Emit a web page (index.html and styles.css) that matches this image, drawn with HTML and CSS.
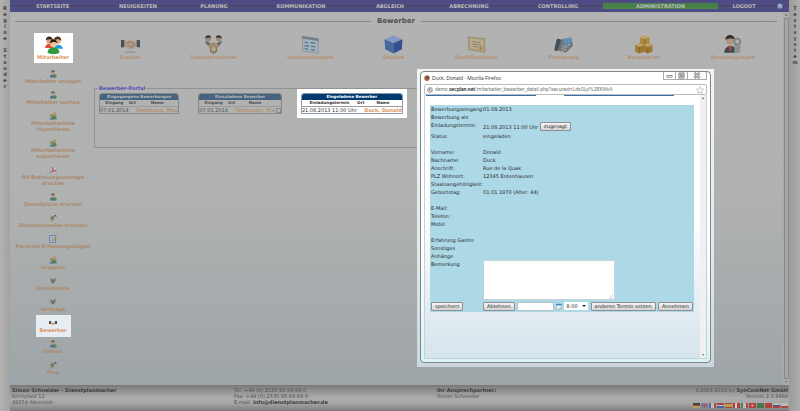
FILE: index.html
```html
<!DOCTYPE html>
<html lang="de">
<head>
<meta charset="utf-8">
<title>Bewerber</title>
<link rel="stylesheet" href="styles.css">
</head>
<body>
<svg class="defs" aria-hidden="true">
  <defs>
    <symbol id="person" viewBox="0 0 16 16">
      <path d="M2 15c0-5 2-6 6-6s5 2 5 6z" fill="#4d708a"/>
      <circle cx="8" cy="5" r="4" fill="#b39a80"/>
      <path d="M4 5c0-6 8-6 8 0-2-2-5-2-8 0z" fill="#6a5d4c"/>
      <circle cx="12" cy="12" r="3.500" fill="#55885a"/>
    </symbol>
    <symbol id="people" viewBox="0 0 16 16">
      <circle cx="11" cy="4" r="3.500" fill="#ab9462"/>
      <path d="M6 15V9c2-3 9-3 9 1v5z" fill="#578554"/>
      <circle cx="5" cy="7" r="3" fill="#9c7f5f"/>
      <path d="M1 15c0-5 8-5 8 0z" fill="#4d7196"/>
    </symbol>
    <symbol id="pdf" viewBox="0 0 16 16">
      <path d="M2 0h9l4 4v12H2z" fill="#bdbdbd" stroke="#999"/>
      <path d="M3 13c4-2 6-9 4-11-2 3 3 8 7 8-4-1-8 1-11 3z" fill="none" stroke="#a84848" stroke-width="1.600"/>
    </symbol>
    <symbol id="sheet" viewBox="0 0 16 16">
      <path d="M1 1h12v14H1z" fill="#aebdca" stroke="#56799b" stroke-width="1.500"/>
      <path d="M3 5h8M3 8h7M3 11h5" stroke="#7592ab"/>
      <path d="M6 12l8-9 2 2-8 8z" fill="#a9894e"/>
    </symbol>
    <symbol id="coins" viewBox="0 0 16 16">
      <path d="M2 3l5 2 6-3 1 6-5 6-5-3z" fill="#828f84"/>
      <path d="M4 4l3 5 5-6M6 12l4-4" stroke="#4f6b57" stroke-width="2" fill="none"/>
    </symbol>
    <symbol id="card" viewBox="0 0 16 16">
      <path d="M2 6l7-3 2 9-7 3z" fill="#8c8b70"/>
      <circle cx="7" cy="8" r="2" fill="#6c6357"/>
      <path d="M10 6l4-4M11 3h3v3" stroke="#4a4f58" stroke-width="1.500" fill="none"/>
    </symbol>
    <symbol id="pair" viewBox="0 0 16 16">
      <path d="M0 4h4v6H0zM12 4h4v6h-4z" fill="#47505b"/>
      <path d="M4 5l4 3 4-3v5l-4 3-4-3z" fill="#e6b48e"/>
      <path d="M6 8h4l-2 3z" fill="#c8634a"/>
    </symbol>
  </defs>
</svg>
<div class="page">
  <aside class="strip">Regine Stauder</aside>
  <div class="app">
    <nav class="nav">
      <a href="#">STARTSEITE</a><a href="#">NEUIGKEITEN</a><a href="#">PLANUNG</a><a href="#">KOMMUNIKATION</a><a href="#">ABGLEICH</a><a href="#">ABRECHNUNG</a><a href="#">CONTROLLING</a><a href="#" class="active">ADMINISTRATION</a><a href="#">LOGOUT</a>
      <svg class="globe" viewBox="0 0 16 16"><circle cx="8" cy="8" r="7" fill="#8299b8"/><path d="M3 5l4-3 3 3-2 4-4 1zM10 9l4-1-2 5z" fill="#aebcc5"/></svg>
    </nav>
    <div class="body">
      <main class="main">
        <h1 class="title"><span>Bewerber</span></h1>
        <div class="modules">
          <a href="#" class="module current">
            <svg viewBox="0 0 32 32"><circle cx="9" cy="10" r="5" fill="#d6a27c"/><path d="M3 9c0-9 12-8 12 0-4-3-8-2-12 0z" fill="#3b251a"/><path d="M2 22c0-9 12-9 13 0z" fill="#e84535"/><circle cx="23" cy="10" r="5" fill="#d9a782"/><path d="M17 9c0-9 13-8 12 1-4-4-8-3-12-1z" fill="#4a301d"/><path d="M17 23c0-9 13-9 15 0z" fill="#1f9ad6"/><circle cx="16" cy="15" r="5.500" fill="#efc59e"/><path d="M10 14c0-9 12-9 12 0-4-4-8-2-12 0z" fill="#2a1d14"/><path d="M6 30c0-12 20-12 20 0-5 3-15 3-20 0z" fill="#2c9b3c"/></svg>
            Mitarbeiter</a>
          <a href="#" class="module">
            <svg viewBox="0 0 32 32"><path d="M0 8l6 1v11l-6 1zM32 8l-6 1v11l6 1z" fill="#4b5159"/><path d="M6 10l9-1 11 1v10l-9 4-11-4z" fill="#b49c8b"/><path d="M9 14l7-3 8 5M11 20l4-4m0 6l4-4m0 3l4-4" stroke="#89705f" fill="none" stroke-width="1.500"/><ellipse cx="16" cy="29" rx="10" ry="1.500" fill="#989898"/></svg>
            Kunden</a>
          <a href="#" class="module">
            <svg viewBox="0 0 32 32"><circle cx="7" cy="6" r="5" fill="#a08879"/><circle cx="25" cy="6" r="5" fill="#a08879"/><path d="M2 5c0-6 10-6 10-1zM20 4c0-5 10-5 10 1z" fill="#393939"/><path d="M1 10l7 2 5 5-6 2zM31 10l-7 2-5 5 6 2z" fill="#57616c"/><path d="M7 16l9-4 9 4-2 6H9z" fill="#9d8c6e"/><path d="M10 20l6 3 6-3v8l-6 4-6-4z" fill="#807561"/><circle cx="16" cy="24" r="4" fill="#b3a68c"/></svg>
            Subunternehmer</a>
          <a href="#" class="module">
            <svg viewBox="0 0 32 32"><path d="M2 2l27 4v25L3 27z" fill="#a5b0b8" stroke="#788690"/><path d="M2 2l27 4v4L2 6z" fill="#71818c"/><path d="M6 12l6 1m4 0l8 1M6 18l8 1m3 0l7 1M6 23l6 1m5 1l7 1" stroke="#55809a" stroke-width="2.500"/></svg>
            Veranstaltungen</a>
          <a href="#" class="module">
            <svg viewBox="0 0 32 32"><path d="M16 1l15 6-15 7L1 7z" fill="#8299c1"/><path d="M1 7l15 7v17L2 24z" fill="#4668a0"/><path d="M31 7l-15 7v17l14-7z" fill="#344f8e"/></svg>
            Objekte</a>
          <a href="#" class="module">
            <svg viewBox="0 0 32 32"><path d="M2 3l28 3v23L3 25z" fill="#ab9c7c" stroke="#8f7e5c"/><path d="M5 6l22 3v16L6 22z" fill="#b7ae93"/><path d="M9 11l14 2M8 15l16 2M10 19l9 1" stroke="#82785f" stroke-width="1.500"/><circle cx="23" cy="22" r="3" fill="#a58642"/></svg>
            Qualifikationen</a>
          <a href="#" class="module">
            <svg viewBox="0 0 32 32"><path d="M8 8l21-4 3 14-12 12-18-5z" fill="#6d757b"/><path d="M16 7l13-3 1 9-14 3z" fill="#5c92b4"/><path d="M4 9c3-5 8-2 7 2L7 24c-2 5-7 3-6-1z" fill="#454c52"/><path d="M14 19l13-3M13 23l11-3M13 27l9-3" stroke="#b3b7b9" stroke-width="2" stroke-dasharray="3 2"/></svg>
            Firmierung</a>
          <a href="#" class="module">
            <svg viewBox="0 0 32 32"><path d="M10 4l8-3 8 3v10l-8 3-8-3z" fill="#ab8840"/><path d="M2 17l8-3 7 3v11l-8 3-7-3zM16 17l8-3 7 3v11l-8 3-7-3z" fill="#9d7932"/><path d="M10 4l8 3 8-3-8-3zM2 17l7 3 8-3-7-3zM16 17l7 3 8-3-7-3z" fill="#c0a35e"/><path d="M18 7v9M9 20v10M23 20v10" stroke="#765b28"/></svg>
            Ressourcen</a>
          <a href="#" class="module">
            <svg viewBox="0 0 32 32"><circle cx="12" cy="9" r="7" fill="#b19480"/><path d="M4 8c0-11 16-10 16 0-6-4-10-2-16 0z" fill="#383330"/><path d="M2 30c0-14 20-17 22 0z" fill="#3e464e"/><path d="M9 17l3 3 3-3-1 10h-3z" fill="#a84c45"/><circle cx="24" cy="11" r="5" fill="none" stroke="#7b8184" stroke-width="3"/><path d="M19 16h10v14H19z" fill="#8b9194"/></svg>
            Berechtigungen</a>
        </div>
        <div class="columns">
          <ul class="side">
            <li><a href="#"><svg><use href="#person"/></svg>Mitarbeiter anlegen</a></li>
            <li><a href="#"><svg><use href="#person"/></svg>Mitarbeiter suchen</a></li>
            <li><a href="#"><svg><use href="#people"/></svg>Mitarbeiterliste<br>importieren</a></li>
            <li><a href="#"><svg><use href="#people"/></svg>Mitarbeiterliste<br>exportieren</a></li>
            <li><a href="#"><svg><use href="#pdf"/></svg>RV-Befreiungsanträge<br>drucken</a></li>
            <li><a href="#"><svg><use href="#person"/></svg>Dienstpläne drucken</a></li>
            <li><a href="#"><svg><use href="#card"/></svg>Dienstausweise drucken</a></li>
            <li><a href="#"><svg><use href="#sheet"/></svg>Personal Erfassungsbogen</a></li>
            <li><a href="#"><svg><use href="#people"/></svg>Gruppen</a></li>
            <li><a href="#"><svg><use href="#coins"/></svg>Grundlöhne</a></li>
            <li><a href="#"><svg><use href="#coins"/></svg>Verträge</a></li>
            <li><a href="#" class="current"><svg><use href="#pair"/></svg>Bewerber</a></li>
            <li><a href="#"><svg><use href="#person"/></svg>Urlaub</a></li>
            <li><a href="#"><svg><use href="#card"/></svg>Map</a></li>
          </ul>
          <fieldset class="portal">
            <legend>Bewerber-Portal</legend>
            <div class="lists">
              <table class="list">
                <thead>
                  <tr><th colspan="3" class="cap">Eingegangene Bewerbungen</th></tr>
                  <tr><th>Eingang</th><th>Ort</th><th>Name</th></tr>
                </thead>
                <tbody><tr><td>07.01.2014</td><td></td><td><a href="#">Testmann, Max</a></td></tr></tbody>
              </table>
              <table class="list">
                <thead>
                  <tr><th colspan="4" class="cap">Einzuladene Bewerber</th></tr>
                  <tr><th>Eingang</th><th>Ort</th><th>Name</th><th></th></tr>
                </thead>
                <tbody><tr><td>07.01.2014</td><td></td><td><a href="#">Testmann, Pia</a></td><td class="tick"><input type="checkbox" aria-label="Testmann, Pia einladen"></td></tr></tbody>
              </table>
              <div class="lit">
                <table class="list">
                  <thead>
                    <tr><th colspan="3" class="cap">Eingeladene Bewerber</th></tr>
                    <tr><th>Einladungstermin</th><th>Ort</th><th>Name</th></tr>
                  </thead>
                  <tbody><tr><td>21.08.2013 11:00 Uhr</td><td></td><td><a href="#">Duck, Donald</a></td></tr></tbody>
                </table>
              </div>
            </div>
          </fieldset>
        </div>
      </main>
      <div class="scroll"><i class="up"></i><b></b><i class="down"></i></div>
    </div>
    <footer class="footer">
      <div><strong>Simon Schneider - Dienstplanmacher</strong><br>Kirchplatz 11<br>48354 Albersloh</div>
      <div>Tel: +49 (0) 2535 95 69 69 0<br>Fax: +49 (0) 2535 95 69 69 9<br>E-mail: <strong>info@dienstplanmacher.de</strong></div>
      <div><strong>Ihr Ansprechpartner:</strong><br>Simon Schneider</div>
      <div class="legal">©2003-2014 by <strong>SynComNet GmbH</strong><br>Version 2.3.8484
        <div class="flags"><i class="de"></i><i class="gb"></i><i class="fr"></i><i class="nl"></i><i class="es"></i><i class="dk"></i><i class="it"></i><i class="tr"></i><i class="sa"></i><i class="cn"></i><i class="ru"></i><i class="pl"></i></div>
      </div>
    </footer>
  </div>
  <aside class="strip right">Testsystem</aside>
</div>

<section class="popup">
  <div class="window">
    <header class="titlebar">
      <svg viewBox="0 0 16 16"><circle cx="8" cy="8" r="7.500" fill="#e0701f"/><circle cx="9" cy="7" r="4.500" fill="#2a5a9c"/><path d="M1 5c1 7 7 8 12 6-3 6-12 5-12-6z" fill="#c9401c"/></svg>
      <span>Duck, Donald - Mozilla Firefox</span>
      <div class="controls">
        <button aria-label="Minimieren"><svg viewBox="0 0 12 8"><path d="M3 4h6v2H3z" fill="#fff" stroke="#888"/></svg></button>
        <button aria-label="Maximieren"><svg viewBox="0 0 12 8"><path d="M3 1h6v6H3zM5 3h2v2H5z" fill="#ccc" stroke="#888"/></svg></button>
        <button aria-label="Schließen" class="close"><svg viewBox="0 0 12 8"><path d="M3 1l6 6M9 1L3 7" stroke="#888" stroke-width="3"/><path d="M3 1l6 6M9 1L3 7" stroke="#eee"/></svg></button>
      </div>
    </header>
    <div class="url">
      <svg viewBox="0 0 16 16"><circle cx="8" cy="8" r="6.500" fill="#ddd" stroke="#888" stroke-width="2"/><path d="M4 5l4-2 2 3-3 4zM9 9l3-1-1 4z" fill="#888"/></svg>
      <span>demo.<b>secplan.net</b>/mitarbeiter_bewerber_detail.php?secureid=LdsSLyI%2BXMvA</span>
      <svg class="star" viewBox="0 0 16 16"><path d="M8 1l2 5 5 .5-4 3.500 1.500 5L8 12l-4.500 3L5 10 1 6.500 6 6z" fill="#fff" stroke="#999"/></svg>
    </div>
    <div class="view">
      <div class="sheet">
        <div class="tabs"><i></i><i></i></div>
        <form class="form">
          <div class="row"><span>Bewerbungseingang:</span><span>01.08.2013</span></div>
          <div class="row"><span>Bewerbung als:</span></div>
          <div class="row tall"><span>Einladungstermin:</span><div class="term">21.08.2013 11:00 Uhr <button type="button">zugesagt</button></div></div>
          <div class="row gap"><span>Status</span><span>eingeladen</span></div>
          <div class="row"><span>Vorname:</span><span>Donald</span></div>
          <div class="row"><span>Nachname:</span><span>Duck</span></div>
          <div class="row"><span>Anschrift:</span><span>Rue de la Quak</span></div>
          <div class="row"><span>PLZ Wohnort:</span><span>12345 Entenhausen</span></div>
          <div class="row"><span>Staatsangehörigkeit:</span></div>
          <div class="row gap"><span>Geburtstag:</span><span>01.01.1970 (Alter: 44)</span></div>
          <div class="row"><span>E-Mail:</span></div>
          <div class="row"><span>Telefon:</span></div>
          <div class="row gap"><span>Mobil:</span></div>
          <div class="row"><span>Erfahrung Gastro</span></div>
          <div class="row"><span>Sonstiges</span></div>
          <div class="row"><span>Anhänge</span></div>
          <div class="row"><label for="note">Bemerkung</label><div class="note"><textarea id="note"></textarea><svg viewBox="0 0 4 4"><path d="M0 4l4-4M2 4l2-2" stroke="#aaa" stroke-width=".6"/></svg></div></div>
          <div class="row actions">
            <div><button type="button">speichern</button></div>
            <div class="tools">
              <button type="button">Ablehnen</button>
              <input type="text" aria-label="Datum">
              <svg viewBox="0 0 16 16"><path d="M1 2h14v13H1z" fill="#eef3f7" stroke="#6689aa"/><path d="M1 1h14v4H1z" fill="#3f83bd"/><path d="M9 9h5v5H9z" fill="#e2c489"/></svg>
              <div class="pick"><select aria-label="Uhrzeit"><option>8:00</option></select></div>
              <button type="button">anderen Termin setzen</button>
              <button type="button">Annehmen</button>
            </div>
          </div>
        </form>
      </div>
      <div class="scroll light"><i class="up"></i><b></b><i class="down"></i></div>
    </div>
  </div>
</section>
</body>
</html>
```
FILE: styles.css
```css
* { box-sizing: border-box; }

body {
  margin: 0;
  font: 5px/6px "DejaVu Sans", Verdana, sans-serif;
  color: #505050;
  background: #a8a8a8;
  overflow: hidden;
}

a { color: inherit; text-decoration: none; }
button, input, select, textarea { font: inherit; color: inherit; margin: 0; }
.defs { position: absolute; width: 0; height: 0; }

.page { display: flex; height: 100vh; }

.strip {
  width: 10px;
  flex: none;
  padding-top: 5px;
  background: linear-gradient(90deg, #b2b2b2, #a2a2a2);
  font-weight: bold;
  color: #444;
  writing-mode: vertical-rl;
  text-orientation: upright;
  line-height: 10px;
}
.strip.right { width: 11px; background: linear-gradient(90deg, #9c9c9c, #adadad); }

.app { flex: 1; min-width: 0; display: flex; flex-direction: column; }

.nav {
  display: grid;
  grid-template-columns: 85fr 86fr 66fr 108fr 70fr 88fr 90fr 115fr 52fr 19fr;
  align-items: center;
  height: 12px;
  background: linear-gradient(#4c4a80, #504e8a 35%, #484660 50%, #504e8a 65%, #4c4a80);
  color: #bcbcbc;
  font-weight: bold;
  text-align: center;
}
.nav .active { background: linear-gradient(#4a804a, #458045 50%, #4a8a4a); }
.globe { width: 6px; height: 6px; justify-self: center; }

.body {
  flex: 1;
  min-height: 0;
  display: flex;
  background: linear-gradient(#b2b2b2, #b0b1b1 50%, #9ea5a8);
}
.main { flex: 1; min-width: 0; padding: 5px 6px 0 5px; }

.title {
  display: flex;
  align-items: center;
  gap: 6px;
  margin: 0;
  font-size: 7px;
  line-height: 8px;
}
.title::before, .title::after { content: ""; flex: 1; height: 1px; background: #868686; }

.modules {
  display: grid;
  grid-template-columns: 76fr 78fr 89fr 104fr 62fr 104fr 70fr 90fr 88fr;
  justify-items: center;
  margin-top: 8px;
}
.module {
  display: flex;
  flex-direction: column;
  align-items: center;
  height: 30px;
  padding-top: 2px;
  color: #b39276;
  font-weight: bold;
}
.module svg { width: 19px; height: 19px; }
.module.current { width: 39px; background: #fff; color: #e0945c; }

.columns { display: flex; align-items: flex-start; }
.side {
  width: 76px;
  margin: 7px 0 0;
  padding: 0;
  list-style: none;
  font-weight: bold;
  color: #ab8a6d;
  text-align: center;
}
.side li { margin-bottom: 7px; white-space: nowrap; }
.side a { display: block; }
.side svg { display: block; width: 8px; height: 8px; margin: 0 auto; }
.side .current {
  width: 35px;
  margin: -4px auto;
  padding: 4px 0;
  background: #e6eef4;
  color: #e2965f;
}

.portal {
  width: 620px;
  height: 63px;
  margin: 22px 0 0 3px;
  padding: 2px 4px;
  border: 1px solid #929292;
}
.portal legend { padding: 0 1px; margin-left: -1px; font-weight: bold; color: #5650b8; }
.lists { display: flex; align-items: flex-start; gap: 19px; }

.list {
  border: 1px solid #888;
  border-radius: 3px 3px 0 0;
  border-spacing: 0;
  overflow: hidden;
  color: #505050;
  white-space: nowrap;
}
.list th, .list td { padding: 0; height: 6px; }
.list th { border-bottom: 1px solid #9b9b9b; font-size: 4px; }
.list .cap { border: 0; background: #466480; color: #b8b8b8; }
.list a { color: #b39276; font-weight: bold; }
.list .tick { padding-left: 1px; }
.list input { appearance: none; display: block; width: 5px; height: 5px; border: 1px solid #8b8b8b; }

.lit { margin: -4px; padding: 4px; background: #fff; }
.lit .list { border-color: #8c9aa8; color: #333; }
.lit .cap { background: #003a70; color: #fff; }
.lit a { color: #e0945c; }

.scroll {
  width: 6px;
  flex: none;
  display: flex;
  flex-direction: column;
  align-items: center;
  padding: 2px 0;
  background: #aaa;
}
.scroll b { flex: 1; width: 5px; margin: 2px 0; border: 1px solid #8a8a8a; background: #a6a6a6; }
.scroll i { border: 1px solid transparent; }
.scroll .up { border-bottom: 2px solid #666; border-top: 0; }
.scroll .down { border-top: 2px solid #666; border-bottom: 0; }
.scroll.light { background: #f0f0f0; }
.scroll.light b { border: 0; background: none; }

.footer {
  display: grid;
  grid-template-columns: 222fr 203fr 220fr 131fr;
  height: 26px;
  padding: 2px 1px 0 2px;
  background: linear-gradient(#787878, #8e8e8e 20%, #acacac 50%, #a6a6a6 70%, #7c7c7c);
}
.footer strong { color: #3c3c3c; }
.legal { text-align: right; }
.flags { display: flex; justify-content: flex-end; gap: 1px; margin-top: 4px; }
.flags i { width: 7px; height: 5px; }
.de { background: linear-gradient(#444 33%, #a44 33% 66%, #b3a050 66%); }
.gb { background: linear-gradient(#0000 40%, #a55 40% 60%, #0000 60%), linear-gradient(90deg, #7580a5 40%, #a55 40% 60%, #7580a5 60%); }
.fr { background: linear-gradient(90deg, #5a6aa0 33%, #bbb 33% 66%, #b04848 66%); }
.nl { background: linear-gradient(#a44 33%, #bbb 33% 66%, #4a64a0 66%); }
.es { background: linear-gradient(#a84040 25%, #b8a040 25% 75%, #a84040 75%); }
.dk { background: linear-gradient(90deg, #b03c3c 30%, #ccc 30% 50%, #b03c3c 50%); }
.it { background: linear-gradient(90deg, #488a50 33%, #bbb 33% 66%, #b04848 66%); }
.tr { background: radial-gradient(#c99 20%, #b03c3c 40%); }
.sa { background: #45784a; }
.cn { background: #b0443a; }
.ru { background: linear-gradient(#bbb 33%, #4a54a0 33% 66%, #a84444 66%); }
.pl { background: linear-gradient(#bbb 50%, #b04848 50%); }

/* Detail window above the page */
.popup {
  position: absolute;
  left: 417px;
  top: 69px;
  width: 297px;
  padding: 2px 3px 4px;
  background: linear-gradient(#f4f4f4, #e4e8ea 60%, #ccd6da);
  color: #2c2c2c;
}
.window {
  padding: 0 3px 3px;
  border: 1px solid #7c868e;
  border-radius: 4px;
  background: linear-gradient(#fff 60%, #d8f4f4);
}
.titlebar {
  display: flex;
  align-items: flex-start;
  gap: 2px;
  height: 12px;
  font: 5px/12px "Open Sans", sans-serif;
}
.titlebar > svg { width: 6px; height: 6px; margin-top: 3px; }
.controls { display: flex; margin-left: auto; }
.controls button {
  width: 12px;
  height: 8px;
  padding: 0;
  border: 1px solid #aaa;
  border-width: 0 0 1px 1px;
  border-radius: 0;
  background: #fff;
}
.controls .close { width: 20px; border-right-width: 1px; }
.controls svg { display: block; width: 100%; height: 7px; }

.url {
  display: flex;
  align-items: center;
  gap: 2px;
  height: 11px;
  padding: 0 2px;
  border: 1px solid #bbb;
  border-radius: 2px;
  background: #fff;
  font: 5px/9px Roboto, sans-serif;
  color: #777;
}
.url b { color: #222; font-weight: 500; }
.url svg { width: 6px; height: 6px; }
.url .star { width: 8px; height: 8px; margin-left: auto; }

.view { display: flex; border: 1px solid #c5d2d8; border-top: 0; }
.sheet { flex: 1; min-width: 0; padding: 0 6px 46px 5px; background: linear-gradient(#fff 45%, #d6e4ec); }
.tabs { display: flex; gap: 28px; height: 10px; margin-left: -4px; }
.tabs i { width: 110px; height: 1px; background: #3a6ea5; }

.form { background: #add8e6; padding: 0 1px; line-height: 8px; }
.row { display: grid; grid-template-columns: 52px 1fr; white-space: nowrap; min-height: 8px; }
.row.gap { margin-bottom: 8px; }
.row.tall { height: 11px; }
.term { display: flex; align-items: center; gap: 2px; }
.form button {
  height: 9px;
  padding: 0 3px;
  border: 1px solid #8e8e8e;
  border-radius: 1px;
  background: linear-gradient(#f4f4f4, #d4d4d4);
  line-height: 7px;
}
.note { position: relative; width: 132px; height: 40px; }
.note svg { position: absolute; right: 2px; bottom: 1px; width: 4px; height: 4px; }
.form textarea {
  display: block;
  width: 100%;
  height: 100%;
  padding: 1px;
  border: 1px solid #c4d4da;
  background: #fff;
  resize: none;
}
.actions { height: 12px; align-items: center; }
.actions > div:first-child { display: flex; }
.tools { display: flex; align-items: center; justify-content: space-between; }
.tools input { width: 37px; height: 9px; padding: 0 1px; border: 1px solid #b4c4ca; background: #fff; }
.tools svg { width: 6px; height: 7px; }
.pick { position: relative; display: flex; }
.pick select {
  appearance: none;
  width: 24px;
  height: 8px;
  padding: 0 2px;
  border: 0;
  border-radius: 0;
  background: #fff;
  line-height: 8px;
}
.pick::after {
  content: "";
  position: absolute;
  right: 2px;
  top: 3px;
  border: 2px solid transparent;
  border-top-color: #222;
  border-bottom: 0;
}
```
